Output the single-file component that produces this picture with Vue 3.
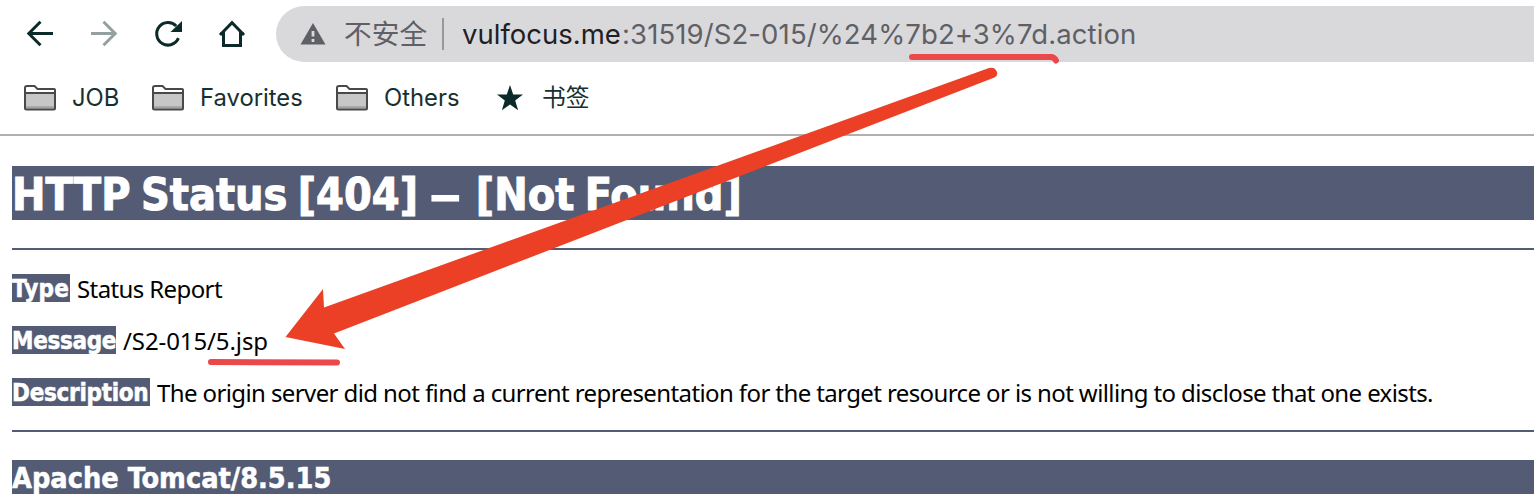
<script setup>
const folders = [
  { name: 'JOB', cls: 'job' },
  { name: 'Favorites', cls: 'favorites' },
  { name: 'Others', cls: 'others' },
]
const rows = [
  { label: 'Type', text: 'Status Report', cls: 'type' },
  { label: 'Message', text: '/S2-015/5.jsp', cls: 'message' },
  {
    label: 'Description',
    text: 'The origin server did not find a current representation for the target resource or is not willing to disclose that one exists.',
    cls: 'description',
  },
]
</script>

<template>
  <div class="window">
    <header class="chrome">
      <div class="toolbar">
        <svg class="nav" viewBox="0 0 32 32"><path d="M29 15.500H5M16.500 3.800 4.800 15.500l11.700 11.700" /></svg>
        <svg class="nav muted" viewBox="0 0 32 32"><path d="M3 15.500h24M15.500 3.800l11.700 11.700-11.700 11.700" /></svg>
        <svg class="nav" viewBox="0 0 32 32">
          <path d="M26.400 20.200A11.300 11.300 0 1 1 24.200 8" />
          <path class="solid" d="M30 3v11H18.500z" />
        </svg>
        <svg class="nav" viewBox="0 0 32 32"><path d="M7.500 14v13.500h17V14M4 17 16 4.700 28 17M4 15.800h3.500M24.500 15.800h3.500" /></svg>
        <div class="omnibox">
          <svg class="warn" viewBox="0 0 26 24">
            <path d="M13 1 25.500 22.500H.5z" fill="#5f6065" />
            <path d="M13 9v5.500M13 17v3" stroke="#d9d9dc" stroke-width="2.800" />
          </svg>
          <span class="insecure">不安全</span>
          <span class="divider"></span>
          <span class="host">vulfocus.me</span><span class="path">:31519/S2-015/%24%7b2+3%7d.action</span>
        </div>
      </div>
      <nav class="bookmarks">
        <div v-for="f in folders" :key="f.name" class="bookmark" :class="f.cls">
          <svg class="folder" viewBox="0 0 32 26">
            <path d="M1 22.500V3a2 2 0 0 1 2-2h7.500l3 3H30a1 1 0 0 1 1 1v18.500a1 1 0 0 1-1 1H2.500A1.500 1.500 0 0 1 1 23z" fill="#fff" />
            <path d="M1.500 9h29v15h-29z" fill="#c7c7c7" />
            <path d="M2 22.200h28" stroke="#a4a4a4" stroke-width="2" />
            <path d="M1 8h30M1 22.500V3a2 2 0 0 1 2-2h7.500l3 3H30a1 1 0 0 1 1 1v18.500a1 1 0 0 1-1 1H2.500A1.500 1.500 0 0 1 1 23z" fill="none" stroke="#4a4848" stroke-width="2" />
          </svg>
          <span class="name">{{ f.name }}</span>
        </div>
        <div class="bookmark shuqian">
          <svg class="star" viewBox="0 0 26 26"><path d="m13 0 3.200 9.400 9.800.2-7.800 6 2.900 9.600L13 19.500l-8.100 5.700 2.900-9.600-7.800-6 9.800-.2z" fill="#0b2a2a" /></svg>
          <span class="name">书签</span>
        </div>
      </nav>
    </header>

    <main class="page">
      <h1>HTTP Status [404] <span class="dash">–</span> [Not Found]</h1>
      <hr />
      <p v-for="r in rows" :key="r.label" :class="r.cls">
        <b>{{ r.label }}</b><span class="value">{{ r.text }}</span>
      </p>
      <hr />
      <h3>Apache Tomcat/8.5.15</h3>
    </main>

    <svg class="marks" viewBox="0 0 1534 502">
      <path d="M285.500 337 323 289l1 18.500L989 68q6-1.500 8 4 1 4-2.500 5.500L334 333.500l11 15.500z" fill="#eb4026" />
      <path d="M912 57h139q3 0 5 3.500" class="stroke" />
      <path d="M211 362l126 .5" class="stroke" />
    </svg>
  </div>
</template>

<style>
body { background: #fff; overflow: hidden; }
</style>

<style scoped>
.window { position: relative; width: 1534px; height: 502px; overflow: hidden; background: #fff; }
.chrome { box-sizing: border-box; height: 136px; padding-top: 6px; border-bottom: 2px solid #b0b0b0; font-family: Inter, "Noto Sans CJK SC", sans-serif; }
.toolbar { display: flex; height: 56px; align-items: center; padding-left: 24px; }
.nav { width: 32px; height: 32px; flex: none; margin-right: 32px; fill: none; stroke: #0b2a2a; stroke-width: 3; }
.nav.muted { stroke: #93a09f; }
.nav .solid { fill: #0b2a2a; stroke: none; }
.nav:nth-of-type(4) { margin-right: 28px; }
.omnibox { display: flex; align-items: center; flex: 1; height: 56px; padding-left: 24px; border-radius: 28px 0 0 28px; background: #d9d9dc; white-space: nowrap; font-size: 27.500px; line-height: 58px; }
.warn { width: 26px; height: 24px; flex: none; }
.insecure { width: 83px; margin-left: 18px; font-size: 27.700px; line-height: 56px; color: #5f6065; }
.divider { width: 2px; height: 32px; margin: 0 18px 0 15px; background: #98989b; }
.host { width: 160px; color: #1f2023; }
.path { color: #5f6065; letter-spacing: 0.110px; }
.bookmarks { display: flex; height: 72px; align-items: center; padding-left: 24px; font-size: 23.800px; color: #17302f; }
.bookmark { display: flex; align-items: center; height: 30px; }
.folder { width: 32px; height: 26px; }
.name { margin-left: 16px; line-height: 30px; white-space: nowrap; }
.job { width: 128px; }
.favorites { width: 184px; }
.others { width: 161px; }
.star { width: 26px; height: 26px; }
.shuqian .name { margin-left: 19px; }
.page { padding: 30px 0 0 12px; font-family: "Noto Sans", sans-serif; }
h1, h3 { margin: 0; background: #545c75; color: #fff; white-space: nowrap; font-family: "DejaVu Sans Condensed", "DejaVu Sans", sans-serif; font-stretch: condensed; }
h1 { height: 54px; font-size: 44.500px; line-height: 57px; word-spacing: -3.500px; -webkit-text-stroke: 1px #fff; }
.dash { display: inline-block; width: 29px; margin: 0 2px 0 6px; transform: scaleX(1.650); transform-origin: 8px 50%; }
h3 { height: 34px; font-size: 28.600px; line-height: 37px; -webkit-text-stroke: 0.500px #fff; }
hr { height: 2px; margin: 28px 0 24px; border: 0; background: #545c75; }
p { display: flex; height: 28px; margin: 0 0 24px; font-size: 24px; line-height: 30px; white-space: nowrap; color: #000; }
p + hr { margin: 24px 0 28px; }
b { background: #545c75; color: #fff; height: 28px; line-height: 31px; font-family: "DejaVu Sans Condensed", "DejaVu Sans", sans-serif; font-stretch: condensed; letter-spacing: -0.250px; -webkit-text-stroke: 0.500px #fff; }
.value { margin-left: 7px; letter-spacing: -0.605px; }
.type b { width: 58px; letter-spacing: 0.300px; }
.message b { width: 104px; letter-spacing: -0.350px; }
.message .value { letter-spacing: -0.100px; }
.description b { width: 138px; letter-spacing: -0.300px; }
.marks { position: absolute; inset: 0; width: 1534px; height: 502px; pointer-events: none; }
.stroke { fill: none; stroke: #eb484b; stroke-width: 6; stroke-linecap: round; stroke-linejoin: round; }
</style>
